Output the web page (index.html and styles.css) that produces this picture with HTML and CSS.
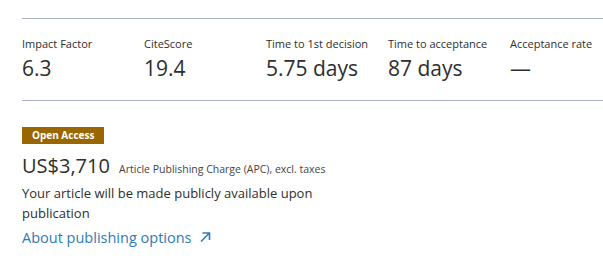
FILE: index.html
```html
<!DOCTYPE html>
<html lang="en">
<head>
    <meta charset="UTF-8">
    <title>Journal insights</title>
    <link rel="stylesheet" href="styles.css">
</head>
<body>
    <section class="insights">
        <div class="metrics">
            <div class="metric">
                <span class="metric-label">Impact Factor</span>
                <span class="metric-value">6.3</span>
            </div>
            <div class="metric">
                <span class="metric-label">CiteScore</span>
                <span class="metric-value">19.4</span>
            </div>
            <div class="metric">
                <span class="metric-label">Time to 1st decision</span>
                <span class="metric-value">5.75 days</span>
            </div>
            <div class="metric">
                <span class="metric-label">Time to acceptance</span>
                <span class="metric-value">87 days</span>
            </div>
            <div class="metric">
                <span class="metric-label">Acceptance rate</span>
                <span class="metric-value">&mdash;</span>
            </div>
        </div>
        <div class="access">
            <span class="badge">Open Access</span>
            <p class="price">US$3,710 <span class="price-note">Article Publishing Charge (APC), excl. taxes</span></p>
            <p class="access-text">Your article will be made publicly available upon publication</p>
            <a class="access-link" href="#">About publishing options
                <svg width="12" height="12" viewBox="0 0 12 12"><path d="M2 10.5 L10 2.5 M3.5 2 H10.5 V9" fill="none" stroke="#2e7bb8" stroke-width="1.6"/></svg>
            </a>
        </div>
    </section>
</body>
</html>
```
FILE: styles.css
```css
body {
    margin: 0;
    background: #fff;
    font-family: "Open Sans", Arial, sans-serif;
    color: #2e2e2e;
}
.insights {
    padding: 18px 0 0 22px;
}
.metrics {
    display: grid;
    grid-template-columns: repeat(5, 122px);
    border-top: 1px solid #a9b0c0;
    border-bottom: 1px solid #a9b0c0;
    padding: 17px 0 17px;
}
.metric {
    display: flex;
    flex-direction: column;
}
.metric-label {
    font-size: 11px;
    line-height: 16px;
}
.metric-value {
    font-size: 21px;
    line-height: 30px;
    margin-top: 1px;
}
.access {
    padding-top: 21px;
    width: 330px;
}
.badge {
    display: inline-block;
    background: #996600;
    color: #fff;
    font-size: 10px;
    font-weight: 700;
    line-height: 17px;
    padding: 0 10px;
}
.price {
    margin: 8px 0 0;
    font-size: 20px;
    line-height: 28px;
}
.price-note {
    font-size: 10.5px;
    color: #444;
    margin-left: 4px;
}
.access-text {
    margin: 0;
    font-size: 13px;
    line-height: 20px;
}
.access-link {
    display: inline-block;
    margin-top: 5px;
    font-size: 14.5px;
    color: #2e7bb8;
    text-decoration: none;
}
.access-link svg {
    margin-left: 4px;
}
```
